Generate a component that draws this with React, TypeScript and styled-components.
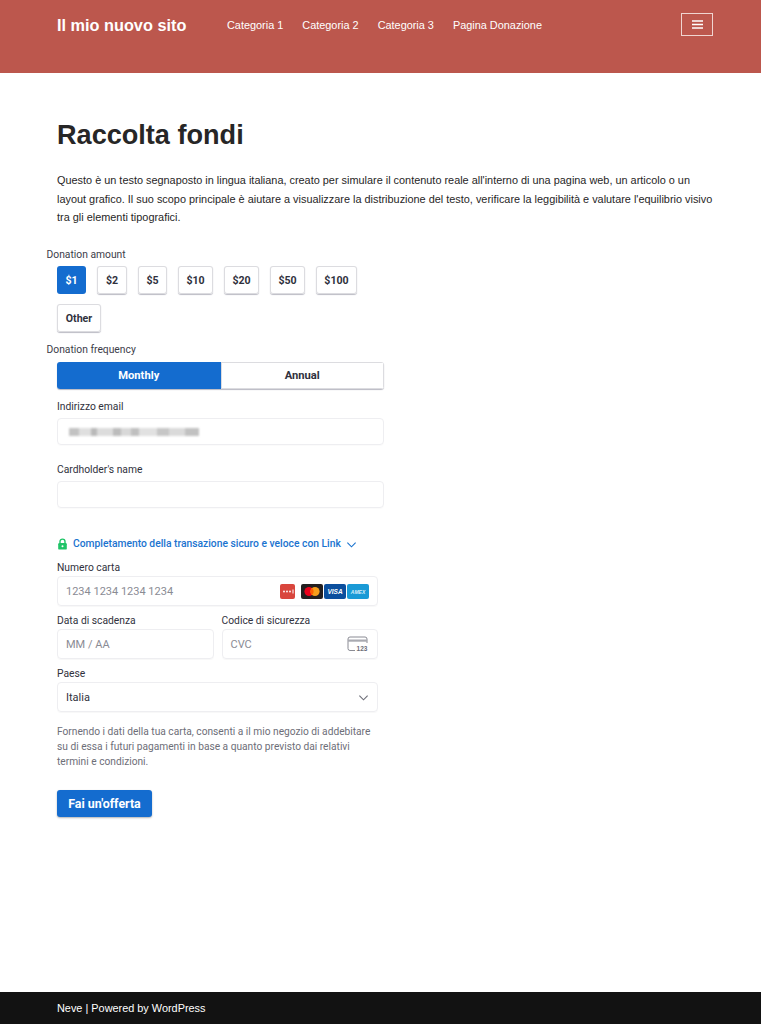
import React from "react";
import styled, { createGlobalStyle } from "styled-components";

const GlobalStyle = createGlobalStyle`
  html, body { margin: 0; padding: 0; background: #fff; }
  body { font-family: "Liberation Sans", Arial, sans-serif; color: #272626; }
  * { box-sizing: border-box; }
`;

const Page = styled.div`
  width: 761px;
  height: 1024px;
  display: flex;
  flex-direction: column;
  overflow: hidden;
`;

const Header = styled.header`
  height: 73px;
  background: #bc574d;
  display: flex;
  align-items: flex-start;
  padding: 13px 48px 0 57px;
  color: #fff;
`;

const Brand = styled.div`
  font-size: 16.3px;
  font-weight: 700;
  line-height: 24px;
  width: 170px;
`;

const Nav = styled.nav`
  display: flex;
  gap: 19px;
  flex: 1;
  font-size: 10.9px;
  line-height: 24px;
`;

const Burger = styled.button`
  width: 32px;
  height: 23px;
  background: transparent;
  border: 1px solid #f0d5d1;
  padding: 0;
  display: flex;
  align-items: center;
  justify-content: center;
  color: #fff;
`;

const Main = styled.main`
  flex: 1;
  padding: 47px 47px 0 57px;
`;

const Title = styled.h1`
  margin: 0;
  font-size: 27.1px;
  line-height: 30px;
  font-weight: 700;
  color: #272626;
`;

const Intro = styled.p`
  margin: 21px 0 0;
  font-size: 10.9px;
  line-height: 18.7px;
  color: #272626;
`;

const Form = styled.form`
  margin-top: 21px;
  width: 327px;
  font-family: Roboto, sans-serif;
  color: #30313d;
`;

const OuterLabel = styled.div`
  font-size: 10.3px;
  line-height: 14px;
  margin-left: -10.5px;
  color: #3c3d49;
`;

const Amounts = styled.div`
  display: flex;
  flex-wrap: wrap;
  gap: 10px 11px;
  margin-top: 4px;
  margin-bottom: 11px;
`;

const Amount = styled.button<{ $active?: boolean; $width: number }>`
  width: ${(p) => p.$width}px;
  height: 28px;
  padding: 0;
  font-family: Roboto, sans-serif;
  font-size: 10.6px;
  font-weight: 700;
  border: none;
  border-radius: 3px;
  background: ${(p) => (p.$active ? "#146ccf" : "#fff")};
  color: ${(p) => (p.$active ? "#fff" : "#30313d")};
  box-shadow: ${(p) =>
    p.$active ? "none" : "inset 0 0 0 1px #dcdce0, 0 1px 1px #bcbcc5"};
`;

const Frequency = styled.div`
  display: flex;
  height: 27px;
  margin-top: 5px;
  margin-bottom: 11px;
  border-radius: 3px;
  box-shadow: 0 1px 1px #b9b9c2;
  overflow: hidden;
`;

const FrequencyOption = styled.div<{ $active?: boolean }>`
  flex: 1;
  display: flex;
  align-items: center;
  justify-content: center;
  font-size: 11.2px;
  font-weight: 700;
  background: ${(p) => (p.$active ? "#146ccf" : "#fff")};
  color: ${(p) => (p.$active ? "#fff" : "#30313d")};
  box-shadow: ${(p) => (p.$active ? "none" : "inset 0 0 0 1px #dcdce0")};
`;

const FieldLabel = styled.label`
  display: block;
  font-size: 10.3px;
  line-height: 14px;
  color: #30313d;
  margin-bottom: 4px;
`;

const InputBox = styled.div<{ $gap?: number }>`
  height: 27px;
  border: 1px solid #eeeef1;
  border-radius: 4px;
  box-shadow: 0 1px 1px rgba(0, 0, 0, 0.02);
  margin-bottom: ${(p) => p.$gap ?? 0}px;
  display: flex;
  align-items: center;
  padding: 0 10px;
`;

const BlurredEmail = styled.div`
  width: 130px;
  height: 8px;
  margin-left: 1px;
  filter: blur(0.8px);
  opacity: 0.8;
  background: linear-gradient(
    90deg,
    #b4b4b4 0 10px,
    #d8d8d8 10px 22px,
    #a8a8a8 22px 28px,
    #d4d4d4 28px 44px,
    #acacac 44px 52px,
    #cfcfcf 52px 62px,
    #b0b0b0 62px 70px,
    #dadada 70px 88px,
    #b8b8b8 88px 100px,
    #d2d2d2 100px 116px,
    #b2b2b2 116px 130px
  );
`;

const LinkRow = styled.div`
  display: flex;
  align-items: center;
  gap: 5px;
  margin: 29px 0 10px;
  font-size: 10.3px;
  line-height: 14px;
  font-weight: 500;
  color: #1a73cf;
`;

const Card = styled.div`
  width: 321px;
`;

const StripeField = styled.div`
  margin-bottom: 8px;
`;

const StripeLabel = styled.label`
  display: block;
  font-size: 10.3px;
  line-height: 14px;
  color: #30313d;
  margin-bottom: 1px;
`;

const StripeInput = styled.div`
  height: 30px;
  border: 1px solid #eeeef1;
  border-radius: 4px;
  box-shadow: 0 1px 1px rgba(0, 0, 0, 0.03);
  display: flex;
  align-items: center;
  justify-content: space-between;
  padding: 0 8px;
  font-size: 11px;
  color: #8a8b94;
`;

const CountryValue = styled.span`
  color: #30313d;
`;

const Split = styled.div`
  display: grid;
  grid-template-columns: 1fr 1fr;
  gap: 8px;
`;

const Brands = styled.div`
  display: flex;
  align-items: center;
  gap: 1px;
`;

const Legal = styled.p`
  margin: 13px 0 0;
  font-size: 10.2px;
  line-height: 14.7px;
  color: #6d6e78;
`;

const Submit = styled.button`
  margin-top: 21px;
  display: block;
  height: 27px;
  width: 95px;
  padding: 0;
  border: none;
  border-radius: 3px;
  background: #146ccf;
  color: #fff;
  font-family: Roboto, sans-serif;
  font-size: 12.4px;
  font-weight: 700;
  box-shadow: 0 1px 2px rgba(0, 0, 0, 0.3);
`;

const Footer = styled.footer`
  height: 32px;
  background: #121212;
  color: #fff;
  font-size: 10.9px;
  display: flex;
  align-items: center;
  padding-left: 57px;
`;

const amounts = [
  { label: "$1", width: 29 },
  { label: "$2", width: 30 },
  { label: "$5", width: 29 },
  { label: "$10", width: 35 },
  { label: "$20", width: 35 },
  { label: "$50", width: 35 },
  { label: "$100", width: 41 },
  { label: "Other", width: 44 },
];

function LockIcon() {
  return (
    <svg width="11" height="12" viewBox="0 0 11 12">
      <path d="M3 5.5V3.6a2.5 2.5 0 0 1 5 0v1.9" fill="none" stroke="#1fc467" strokeWidth="1.4" />
      <rect x="1.2" y="5" width="8.6" height="6.6" rx="1.2" fill="#1fc467" />
      <circle cx="5.5" cy="8.2" r="1" fill="#fff" />
    </svg>
  );
}

function Chevron({ color, size }: { color: string; size: number }) {
  return (
    <svg width={size} height={size} viewBox="0 0 12 12">
      <path d="M1.5 4l4.5 4.5L10.5 4" fill="none" stroke={color} strokeWidth="1.2" />
    </svg>
  );
}

function CardBrands() {
  return (
    <Brands>
      <svg width="15" height="15" viewBox="0 0 15 15" style={{ marginRight: 5 }}>
        <rect width="15" height="15" rx="2" fill="#d9463d" />
        <circle cx="4" cy="7.5" r="0.9" fill="#fff" />
        <circle cx="7" cy="7.5" r="0.9" fill="#fff" />
        <circle cx="10" cy="7.5" r="0.9" fill="#fff" />
        <rect x="12.5" y="5.5" width="1" height="4" fill="#fff" />
      </svg>
      <svg width="22" height="15" viewBox="0 0 22 15">
        <rect width="22" height="15" rx="2" fill="#231f20" />
        <circle cx="8" cy="7.5" r="4.6" fill="#eb001b" />
        <circle cx="14" cy="7.5" r="4.6" fill="#f79e1b" />
        <path d="M11 4a4.6 4.6 0 0 1 0 7a4.6 4.6 0 0 1 0-7z" fill="#ff5f00" />
      </svg>
      <svg width="22" height="15" viewBox="0 0 22 15">
        <rect width="22" height="15" rx="2" fill="#0b4f9e" />
        <text x="11" y="10" textAnchor="middle" fontSize="6.5" fontWeight="700" fontStyle="italic" fill="#fff" fontFamily="Liberation Sans">VISA</text>
      </svg>
      <svg width="22" height="15" viewBox="0 0 22 15">
        <rect width="22" height="15" rx="2" fill="#1a9ad6" />
        <text x="11" y="9.5" textAnchor="middle" fontSize="5" fontWeight="700" fontStyle="italic" fill="#d5eefa" fontFamily="Liberation Sans">AMEX</text>
      </svg>
    </Brands>
  );
}

function CvcIcon() {
  return (
    <svg width="22" height="16" viewBox="0 0 22 16">
      <path d="M8 14.5H3a2 2 0 0 1-2-2V3a2 2 0 0 1 2-2h15a2 2 0 0 1 2 2v4" fill="none" stroke="#8a8b94" strokeWidth="1" />
      <rect x="1" y="3.5" width="19" height="2.2" fill="#a9aab1" />
      <text x="15" y="14.5" textAnchor="middle" fontSize="6.5" fontWeight="700" fill="#6d6e78" fontFamily="Liberation Sans">123</text>
    </svg>
  );
}

export default function App() {
  return (
    <Page>
      <GlobalStyle />
      <Header>
        <Brand>Il mio nuovo sito</Brand>
        <Nav>
          <span>Categoria 1</span>
          <span>Categoria 2</span>
          <span>Categoria 3</span>
          <span>Pagina Donazione</span>
        </Nav>
        <Burger aria-label="Menu">
          <svg width="11" height="9" viewBox="0 0 11 9">
            <path d="M0 1h11M0 4.5h11M0 8h11" stroke="currentColor" strokeWidth="1.3" />
          </svg>
        </Burger>
      </Header>
      <Main>
        <Title>Raccolta fondi</Title>
        <Intro>
          Questo è un testo segnaposto in lingua italiana, creato per simulare il contenuto reale all'interno di una pagina web, un articolo o un layout grafico. Il suo scopo principale è aiutare a visualizzare la distribuzione del testo, verificare la leggibilità e valutare l'equilibrio visivo tra gli elementi tipografici.
        </Intro>
        <Form>
          <OuterLabel>Donation amount</OuterLabel>
          <Amounts>
            {amounts.map((a, i) => (
              <Amount key={a.label} type="button" $active={i === 0} $width={a.width}>{a.label}</Amount>
            ))}
          </Amounts>
          <OuterLabel>Donation frequency</OuterLabel>
          <Frequency>
            <FrequencyOption $active>Monthly</FrequencyOption>
            <FrequencyOption>Annual</FrequencyOption>
          </Frequency>
          <FieldLabel>Indirizzo email</FieldLabel>
          <InputBox $gap={18}>
            <BlurredEmail />
          </InputBox>
          <FieldLabel>Cardholder's name</FieldLabel>
          <InputBox />
          <LinkRow>
            <LockIcon />
            <span>Completamento della transazione sicuro e veloce con Link</span>
            <Chevron color="#1a73cf" size={11} />
          </LinkRow>
          <Card>
            <StripeField>
              <StripeLabel>Numero carta</StripeLabel>
              <StripeInput>
                <span>1234 1234 1234 1234</span>
                <CardBrands />
              </StripeInput>
            </StripeField>
            <Split>
              <StripeField>
                <StripeLabel>Data di scadenza</StripeLabel>
                <StripeInput>MM / AA</StripeInput>
              </StripeField>
              <StripeField>
                <StripeLabel>Codice di sicurezza</StripeLabel>
                <StripeInput>
                  <span>CVC</span>
                  <CvcIcon />
                </StripeInput>
              </StripeField>
            </Split>
            <StripeField>
              <StripeLabel>Paese</StripeLabel>
              <StripeInput>
                <CountryValue>Italia</CountryValue>
                <Chevron color="#6d6e78" size={11} />
              </StripeInput>
            </StripeField>
            <Legal>
              Fornendo i dati della tua carta, consenti a il mio negozio di addebitare su di essa i futuri pagamenti in base a quanto previsto dai relativi termini e condizioni.
            </Legal>
          </Card>
          <Submit type="button">Fai un'offerta</Submit>
        </Form>
      </Main>
      <Footer>Neve | Powered by WordPress</Footer>
    </Page>
  );
}
